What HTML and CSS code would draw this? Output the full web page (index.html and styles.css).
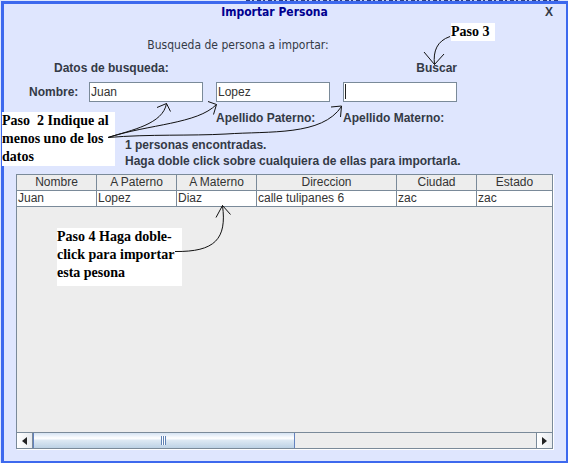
FILE: index.html
```html
<!DOCTYPE html>
<html lang="es">
<head>
<meta charset="utf-8">
<title>Importar Persona</title>
<link rel="stylesheet" href="styles.css">
</head>
<body>
<main class="dialog">
  <header class="titlebar">
    <h1 class="title">Importar Persona</h1>
    <button class="close" type="button">X</button>
  </header>
  <p class="intro">Busqueda de persona a importar:</p>
  <form class="search">
    <h2 class="legend">Datos de busqueda:</h2>
    <button class="submit" type="button">Buscar</button>
    <label class="name-label" for="nombre">Nombre:</label>
    <input class="field" id="nombre" type="text" value="Juan">
    <input class="field" id="paterno" type="text" value="Lopez">
    <span class="active"><input class="field" id="materno" type="text"></span>
    <label class="paterno-label" for="paterno">Apellido Paterno:</label>
    <label class="materno-label" for="materno">Apellido Materno:</label>
  </form>
  <p class="results">1 personas encontradas.<br>Haga doble click sobre cualquiera de ellas para importarla.</p>
  <section class="pane">
    <table class="people">
      <colgroup>
        <col class="col"><col class="col"><col class="col"><col class="col-wide"><col class="col"><col>
      </colgroup>
      <thead>
        <tr><th>Nombre</th><th>A Paterno</th><th>A Materno</th><th>Direccion</th><th>Ciudad</th><th>Estado</th></tr>
      </thead>
      <tbody>
        <tr><td>Juan</td><td>Lopez</td><td>Diaz</td><td>calle tulipanes 6</td><td>zac</td><td>zac</td></tr>
      </tbody>
    </table>
    <div class="scrollbar">
      <button class="arrow" type="button" aria-label="Izquierda"><svg width="5" height="8" viewBox="0 0 5 8"><path d="M5 0v8L0 4z" fill="#222"/></svg></button>
      <div class="track"><div class="thumb"><i class="grip"></i></div></div>
      <button class="arrow arrow-right" type="button" aria-label="Derecha"><svg width="5" height="8" viewBox="0 0 5 8"><path d="M0 0v8l5-4z" fill="#222"/></svg></button>
    </div>
  </section>
</main>
<aside class="note note-2">Paso&nbsp; 2 Indique al<br>menos uno de los<br>datos</aside>
<aside class="note note-3">Paso 3</aside>
<aside class="note note-4">Paso 4 Haga doble-<br>click para importar<br>esta pesona</aside>
<svg class="arrows" width="568" height="463" viewBox="0 0 568 463" fill="none" stroke="#111" stroke-width="1">
  <path d="M108 137.500C132 130 163 124 166.500 103.500M157 107.500l9.500-4 4 8"/>
  <path d="M108 137.500C150 124 197 124 216.500 104.500M208 101.500l8.500 3-3 10"/>
  <path d="M108 137.500C150 134 190 136 226 134C270 131 322 136 341.500 106.500M331 107l10.500-1-1 11"/>
  <path d="M450 36.500C437 41 433 51 434.500 64.500M424 52l10.500 12.500L444 54"/>
  <path d="M175 251.500C215 252 227 239 222.500 205.500M216 217.500l6.500-12 8 9"/>
</svg>
</body>
</html>
```
FILE: styles.css
```css
* { box-sizing: border-box; }

body {
  margin: 0;
  position: relative;
  min-height: 100vh;
  display: flex;
  padding: 1px 0 0 1px;
  background: #dfe7fd;
  color: #343a46;
  font: 12px/16px "Liberation Sans", Arial, sans-serif;
}

/* Lower edge of the menu that the dialog covers */
body::before {
  content: "";
  position: absolute;
  left: 246px;
  right: 8px;
  top: 0;
  height: 1px;
  background: repeating-linear-gradient(90deg, #2a3c86 0 4px, #c5d3f6 4px 6px, #2a3c86 6px 8px, #c5d3f6 8px 11px);
}

h1, h2, p { margin: 0; font-size: inherit; }

button {
  padding: 0;
  border: 0;
  background: none;
  color: inherit;
  font: inherit;
  font-weight: bold;
}

.dialog {
  flex: 1;
  display: flex;
  flex-direction: column;
  padding: 0 13px 12px 12px;
  border: 3px solid #3d69ee;
  border-right-width: 2px;
  border-bottom-width: 2px;
  background: #dfe6fe;
}

.titlebar {
  display: flex;
  justify-content: space-between;
}

.title {
  flex: 1;
  padding-right: 12px;
  text-align: center;
  color: #000090;
  font: bold 12px/16px "DejaVu Sans Condensed", "DejaVu Sans", sans-serif;
}

.intro {
  margin-top: 17px;
  padding-right: 93px;
  text-align: center;
  font: 12px/16px "DejaVu Sans Condensed", "DejaVu Sans", sans-serif;
}

.search {
  display: grid;
  grid-template-columns: 47px repeat(3, 1fr);
  column-gap: 13px;
  margin-top: 7px;
  padding: 0 96px 0 13px;
  font-weight: bold;
}

.legend { grid-column: 1 / 4; padding-left: 25px; }
.submit { justify-self: end; }
.name-label { margin-top: 8px; }

.field {
  width: 100%;
  height: 20px;
  margin-top: 6px;
  padding: 0 1px;
  border: 1px solid #7a8a99;
  background: #fff;
  color: #333;
  font: 12px/16px "Liberation Sans", Arial, sans-serif;
}

.active { position: relative; }
.active::after {
  content: "";
  position: absolute;
  left: 2px;
  top: 8px;
  width: 1px;
  height: 15px;
  background: #222;
}

.paterno-label { grid-column: 3; margin-top: 8px; }
.materno-label { grid-column: 4; margin-top: 8px; }

.results {
  margin-top: 11px;
  padding-left: 109px;
  font-weight: bold;
}

.pane {
  flex: 1;
  display: flex;
  flex-direction: column;
  justify-content: space-between;
  margin-top: 5px;
  border: 1px solid #7a8a99;
  background: #ededed;
  box-shadow: 1px 1px #fff;
}

.people {
  width: 100%;
  table-layout: fixed;
  border-collapse: separate;
  border-spacing: 0;
  color: #333;
  font-size: 12px;
}

.col { width: 80px; }
.col-wide { width: 140px; }

.people th, .people td {
  height: 16px;
  padding: 0 1px;
  border: solid #7a8a99;
  border-width: 0 1px 1px 0;
  line-height: 15px;
  font-weight: normal;
  white-space: nowrap;
}

.people td { background: #fff; text-align: left; }
.people th:last-child, .people td:last-child { border-right: 0; }

.scrollbar {
  display: flex;
  height: 16px;
  border-top: 1px solid #7a8a99;
}

.arrow {
  display: grid;
  place-items: center;
  width: 16px;
  border-right: 1px solid #7a8a99;
  background: linear-gradient(90deg, #fff, #e8ebef);
}

.arrow-right { border-right: 0; border-left: 1px solid #7a8a99; }

.track { flex: 1; }

.thumb {
  display: grid;
  place-items: center;
  width: 52%;
  height: 100%;
  border: solid #6382bf;
  border-width: 0 1px;
  background: linear-gradient(#d5e3f3, #fff 35%, #dce8f3 50%, #bdd2e5);
}

.grip {
  width: 5px;
  height: 9px;
  background: repeating-linear-gradient(90deg, #5f82b4 0 1px, #fff 1px 2px);
}

.note {
  position: absolute;
  background: #fff;
  color: #000;
  font: bold 14px/18px "Liberation Serif", "Times New Roman", serif;
  white-space: nowrap;
}

.note-2 { left: 2px; top: 112px; width: 113px; height: 54px; }
.note-3 { left: 451px; top: 23px; width: 44px; height: 18px; }
.note-4 { left: 57px; top: 228px; width: 125px; height: 58px; }

.arrows { position: absolute; left: 0; top: 0; pointer-events: none; }
```
